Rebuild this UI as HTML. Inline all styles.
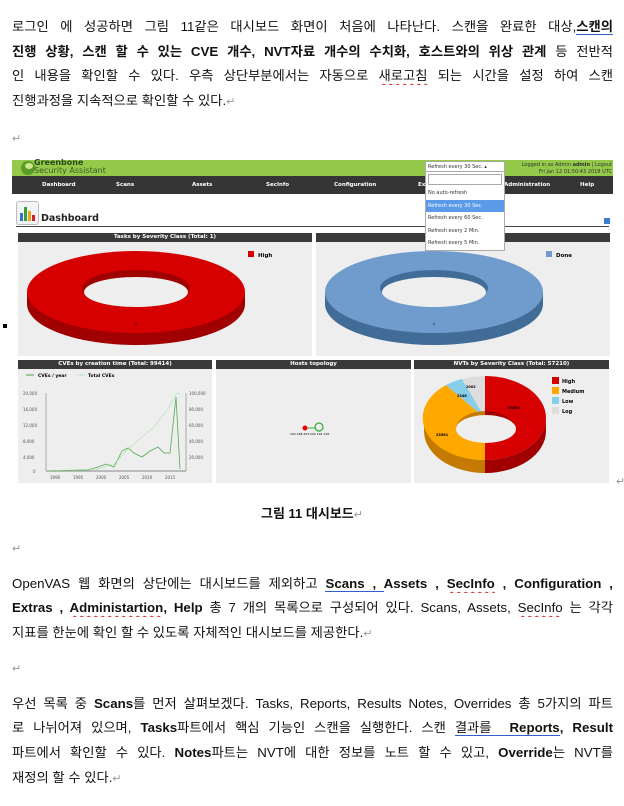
<!DOCTYPE html>
<html><head><meta charset="utf-8">
<style>
body{margin:0;width:624px;height:806px;background:#fff;position:relative;overflow:hidden;font-family:"Liberation Sans","Noto Sans CJK KR","NanumGothic",sans-serif;color:#111}
.l{position:absolute;left:12px;width:601px;font-size:13.3px;line-height:18px;white-space:nowrap}
.j{text-align:justify;text-align-last:justify;white-space:normal;height:18px;overflow:hidden}
b{font-weight:bold}
.u2{border-bottom:3px double #3060c8}
.w{text-decoration:underline wavy #e02020;text-decoration-thickness:1px;text-underline-offset:3px}
.ret{color:#999;font-size:11px}
.a{position:absolute}
.ss{font-family:"DejaVu Sans",sans-serif}
.ph{position:absolute;background:#3a3a3a;color:#fff;font-size:5.5px;font-weight:bold;text-align:center;line-height:9px;height:9px;font-family:"DejaVu Sans",sans-serif}
.pb{position:absolute;background:#eeeeee}
.nav span{position:absolute;top:6px;font-size:5.5px;color:#fff;font-weight:bold}
</style></head><body>

<div class="l j" style="top:18px">로그인 에 성공하면 그림 11같은 대시보드 화면이 처음에 나타난다. 스캔을 완료한 대상,<b class="u2">스캔의</b></div>
<div class="l j" style="top:43px"><b>진행 상황, 스캔 할 수 있는 CVE 개수, NVT자료 개수의 수치화, 호스트와의 위상 관계</b> 등 전반적</div>
<div class="l j" style="top:67px">인 내용을 확인할 수 있다. 우측 상단부분에서는 자동으로 <span class="w">새로고침</span> 되는 시간을 설정 하여 스캔</div>
<div class="l" style="top:92px">진행과정을 지속적으로 확인할 수 있다.<span class="ret">↵</span></div>
<div class="l ret" style="top:130px">↵</div>
<div class="a" style="left:3px;top:324px;width:4px;height:4px;background:#000"></div>

<!-- screenshot -->
<div class="a" style="left:12px;top:160px;width:601px;height:16px;background:#94c94a"></div>
<div class="a ss" style="left:20px;top:158px;width:16px;height:18px;"><svg width="16" height="18"><ellipse cx="8" cy="10" rx="7" ry="7" fill="#5a9a2a"/><ellipse cx="9" cy="8" rx="4" ry="3" fill="#cfe68a"/></svg></div>
<div class="a ss" style="left:34px;top:159px;font-size:8px;font-weight:bold;color:#2a4a1a;line-height:8px">Greenbone<br><span style="font-weight:normal;color:#3a5a2a">Security Assistant</span></div>
<div class="a ss" style="left:508px;top:162px;font-size:5px;color:#333;line-height:7px;text-align:right;width:104px">Logged in as Admin <b>admin</b> | Logout<br>Fri Jan 12 01:50:43 2018 UTC</div>
<div class="a nav ss" style="left:12px;top:176px;width:601px;height:18px;background:#353535">
<span style="left:30px">Dashboard</span><span style="left:104px">Scans</span><span style="left:180px">Assets</span><span style="left:254px">SecInfo</span><span style="left:322px">Configuration</span><span style="left:406px">Extras</span><span style="left:492px">Administration</span><span style="left:568px">Help</span></div>
<div class="a" style="left:16px;top:201px;width:21px;height:22px;border:1px solid #bbb;border-radius:3px;background:#f4f4f4"><svg width="21" height="22"><rect x="3" y="11" width="3" height="8" fill="#3b6fc0"/><rect x="7" y="5" width="3" height="14" fill="#3aa03a"/><rect x="11" y="9" width="3" height="10" fill="#f0a020"/><rect x="15" y="13" width="3" height="6" fill="#d02020"/></svg></div>
<div class="a ss" style="left:41px;top:213px;font-size:9.5px;font-weight:bold;color:#222">Dashboard</div>
<div class="a" style="left:16px;top:226px;width:593px;height:1px;background:#444"></div>
<div class="a" style="left:604px;top:218px;width:6px;height:6px;background:#3a7fd0"></div>

<div class="ph" style="left:18px;top:233px;width:294px">Tasks by Severity Class (Total: 1)</div>
<div class="pb" style="left:18px;top:242px;width:294px;height:114px"></div>
<div class="ph" style="left:316px;top:233px;width:294px">T</div>
<div class="pb" style="left:316px;top:242px;width:294px;height:114px"></div>
<svg class="a" style="left:18px;top:242px" width="592" height="114">
<g><ellipse cx="118" cy="62" rx="109" ry="41" fill="#a00000"/><rect x="9" y="50" width="218" height="12" fill="#a00000"/><ellipse cx="118" cy="50" rx="109" ry="41" fill="#d60000"/>
<ellipse cx="118" cy="46" rx="54" ry="18" fill="#a00000"/><ellipse cx="118" cy="50" rx="52" ry="15" fill="#eee"/>
<text x="118" y="83" font-size="4" text-anchor="middle">1</text>
<rect x="230" y="9" width="6" height="6" fill="#d60000"/><text x="240" y="15" font-size="5.5" font-weight="bold" font-family="DejaVu Sans">High</text></g>
<g transform="translate(298,0)"><ellipse cx="118" cy="62" rx="109" ry="41" fill="#416c98"/><rect x="9" y="50" width="218" height="12" fill="#416c98"/><ellipse cx="118" cy="50" rx="109" ry="41" fill="#6f9ccc"/>
<ellipse cx="118" cy="46" rx="54" ry="18" fill="#416c98"/><ellipse cx="118" cy="50" rx="52" ry="15" fill="#eee"/>
<text x="118" y="83" font-size="4" text-anchor="middle">1</text>
<rect x="230" y="9" width="6" height="6" fill="#6f9ccc"/><text x="240" y="15" font-size="5.5" font-weight="bold" font-family="DejaVu Sans">Done</text></g>
</svg>

<!-- dropdown -->
<div class="a ss" style="left:425px;top:161px;width:76px;height:10px;background:#fff;border:1px solid #aaa;font-size:5px;line-height:10px;color:#333;padding-left:2px">Refresh every 30 Sec. ▴</div>
<div class="a ss" style="left:425px;top:171px;width:78px;height:78px;background:#fff;border:1px solid #aaa;font-size:5px;color:#333">
<div style="margin:2px;height:9px;border:1px solid #aaa"></div>
<div style="height:12.5px;line-height:12.5px;padding-left:2px">No auto-refresh</div>
<div style="height:12.5px;line-height:12.5px;padding-left:2px;background:#5b9ae8;color:#fff">Refresh every 30 Sec.</div>
<div style="height:12.5px;line-height:12.5px;padding-left:2px">Refresh every 60 Sec.</div>
<div style="height:12.5px;line-height:12.5px;padding-left:2px">Refresh every 2 Min.</div>
<div style="height:12.5px;line-height:12.5px;padding-left:2px">Refresh every 5 Min.</div></div>

<!-- bottom row -->
<div class="ph" style="left:18px;top:360px;width:194px">CVEs by creation time (Total: 99414)</div>
<div class="pb" style="left:18px;top:369px;width:194px;height:114px"></div>
<div class="ph" style="left:216px;top:360px;width:195px">Hosts topology</div>
<div class="pb" style="left:216px;top:369px;width:195px;height:114px"></div>
<div class="ph" style="left:414px;top:360px;width:195px">NVTs by Severity Class (Total: 57210)</div>
<div class="pb" style="left:414px;top:369px;width:195px;height:114px"></div>
<svg class="a" style="left:18px;top:369px" width="592" height="114" font-family="DejaVu Sans">
<line x1="8" y1="6" x2="16" y2="6" stroke="#4a4"/><text x="20" y="8" font-size="4.5" font-weight="bold">CVEs / year</text>
<line x1="60" y1="6" x2="68" y2="6" stroke="#8d8" stroke-dasharray="1,1"/><text x="70" y="8" font-size="4.5" font-weight="bold">Total CVEs</text>
<line x1="28" y1="24" x2="28" y2="102" stroke="#666" stroke-width=".5"/><line x1="168" y1="24" x2="168" y2="102" stroke="#666" stroke-width=".5"/>
<line x1="28" y1="102" x2="168" y2="102" stroke="#aaa" stroke-width="1.5"/>
<g font-size="4" fill="#555"><text x="5" y="26">20,000</text><text x="5" y="42">16,000</text><text x="5" y="58">12,000</text><text x="5" y="74">8,000</text><text x="5" y="90">4,000</text><text x="15" y="104">0</text>
<text x="171" y="26">100,000</text><text x="171" y="42">80,000</text><text x="171" y="58">60,000</text><text x="171" y="74">40,000</text><text x="171" y="90">20,000</text>
<text x="32" y="110">1990</text><text x="55" y="110">1995</text><text x="78" y="110">2000</text><text x="101" y="110">2005</text><text x="124" y="110">2010</text><text x="147" y="110">2015</text></g>
<polyline fill="none" stroke="#5a5" stroke-width=".8" points="28,102 70,101 80,98 88,95 96,98 104,82 110,79 116,84 124,88 132,82 140,78 146,84 152,84 158,28 162,100"/>
<polyline fill="none" stroke="#9d9" stroke-width=".8" stroke-dasharray="1.5,1" points="28,102 80,100 96,95 110,80 124,68 136,58 150,40 158,25 162,24"/>
<circle cx="287" cy="59" r="2.5" fill="#e00"/><line x1="289" y1="59" x2="297" y2="59" stroke="#4a4"/><ellipse cx="301" cy="58" rx="4" ry="4" fill="none" stroke="#3a3" stroke-width="1.2"/>
<text x="272" y="66" font-size="3">192.168.253.200 192.128</text>
<g transform="translate(396,4)">
<path d="M10 45 L10 58 A61 42 0 0 0 71 100 L71 87 A61 42 0 0 1 10 45 Z" fill="#c47a00"/>
<path d="M71 87 A61 42 0 0 0 132 45 L132 58 A61 42 0 0 1 71 100 Z" fill="#a00000"/>
<path d="M71 45 L71 3 A61 42 0 0 1 71 87 Z" fill="#d60000"/>
<path d="M71 45 L71 87 A61 42 0 0 1 32 12 Z" fill="#ffa800"/>
<path d="M71 45 L32 12 A61 42 0 0 1 48 6 Z" fill="#87ceeb"/>
<path d="M71 45 L48 6 A61 42 0 0 1 71 3 Z" fill="#ddd"/>
<path d="M42 56 A30 18 0 0 1 71 38 L71 56 Z" fill="#c47a00"/>
<path d="M71 38 A30 18 0 0 1 101 56 L71 56 Z" fill="#a00000"/>
<ellipse cx="72" cy="56" rx="30" ry="14" fill="#eee"/>
<g font-size="3.5" font-weight="bold"><text x="94" y="36">23501</text><text x="22" y="63">23561</text><text x="43" y="24">2346</text><text x="52" y="15">2002</text></g>
<rect x="138" y="4" width="7" height="7" fill="#d60000"/><text x="148" y="10" font-size="5" font-weight="bold">High</text>
<rect x="138" y="14" width="7" height="7" fill="#ffa800"/><text x="148" y="20" font-size="5" font-weight="bold">Medium</text>
<rect x="138" y="24" width="7" height="7" fill="#87ceeb"/><text x="148" y="30" font-size="5" font-weight="bold">Low</text>
<rect x="138" y="34" width="7" height="7" fill="#ddd"/><text x="148" y="40" font-size="5" font-weight="bold">Log</text></g>
</svg>
<div class="a ret" style="left:616px;top:475px">↵</div>

<div class="a" style="left:0;width:624px;top:503px;text-align:center;font-size:13px;font-weight:bold">그림 11 대시보드<span class="ret" style="font-weight:normal">↵</span></div>

<div class="l ret" style="top:540px">↵</div>
<div class="l j" style="top:575px">OpenVAS 웹 화면의 상단에는 대시보드를 제외하고 <b class="u2">Scans , </b><b>Assets , </b><b class="w">SecInfo</b><b> , Configuration ,</b></div>
<div class="l j" style="top:599px"><b>Extras , </b><b class="w">Administartion</b><b>, Help</b> 총 7 개의 목록으로 구성되어 있다. Scans, Assets, <span class="w">SecInfo</span> 는 각각</div>
<div class="l" style="top:624px">지표를 한눈에 확인 할 수 있도록 자체적인 대시보드를 제공한다.<span class="ret">↵</span></div>
<div class="l ret" style="top:660px">↵</div>
<div class="l j" style="top:695px">우선 목록 중 <b>Scans</b>를 먼저 살펴보겠다. Tasks, Reports, Results Notes, Overrides 총 5가지의 파트</div>
<div class="l j" style="top:719px">로 나뉘어져 있으며, <b>Tasks</b>파트에서 핵심 기능인 스캔을 실행한다. 스캔 <span class="u2">결과를 &nbsp;<b>Reports</b></span><b>, Result</b></div>
<div class="l j" style="top:744px">파트에서 확인할 수 있다. <b>Notes</b>파트는 NVT에 대한 정보를 노트 할 수 있고, <b>Override</b>는 NVT를</div>
<div class="l" style="top:769px">재정의 할 수 있다.<span class="ret">↵</span></div>
</body></html>
